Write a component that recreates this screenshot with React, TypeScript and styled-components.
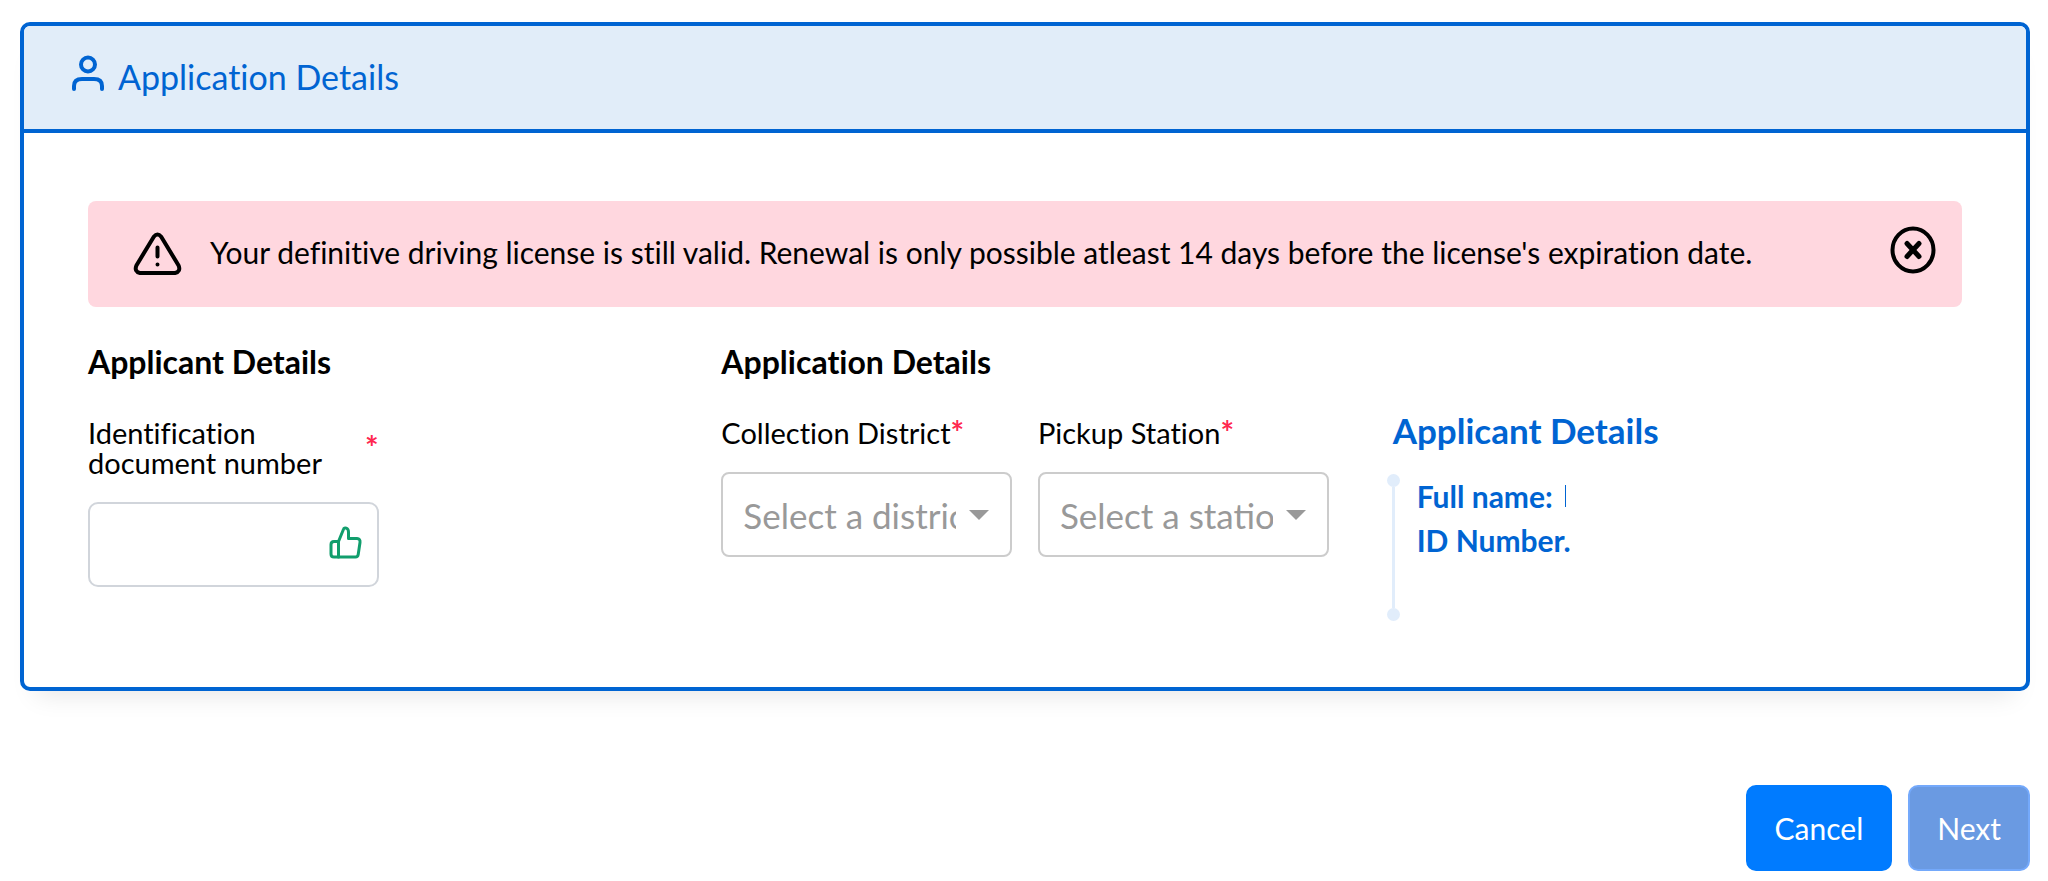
import React from 'react';
import styled, { createGlobalStyle } from 'styled-components';

const blue = '#0064d2';
const font = 'Lato, "Open Sans", sans-serif';

const GlobalStyle = createGlobalStyle`
  *, *::before, *::after { box-sizing: border-box; }
  body {
    margin: 0;
    background: #fff;
    color: #000;
    font-family: ${font};
    font-variant-ligatures: none;
  }
  h1, h2, h3, p, ul { margin: 0; padding: 0; }
`;

const Page = styled.main`
  padding: 22px 18px 8px 20px;
`;

const Card = styled.section`
  border: 4px solid ${blue};
  border-radius: 10px;
  background: #fff;
  box-shadow: 0 20px 24px -16px rgba(0, 0, 0, 0.1);
`;

const CardHeader = styled.header`
  display: flex;
  align-items: center;
  gap: 12px;
  height: 107px;
  padding: 0 46px 2px;
  border-bottom: 4px solid ${blue};
  border-radius: 6px 6px 0 0;
  background: #e1edf9;
  color: ${blue};
`;

const CardTitle = styled.h1`
  font-size: 34px;
  line-height: 40px;
  font-weight: 400;
`;

const UserIcon = styled.svg`
  width: 36px;
  height: 48px;
  fill: none;
  stroke: currentColor;
  stroke-width: 4;
  stroke-linecap: round;
`;

const CardBody = styled.div`
  padding: 68px 64px 66px;
`;

const Alert = styled.div`
  display: flex;
  align-items: center;
  min-height: 106px;
  padding: 0 22px 4px 44px;
  border-radius: 8px;
  background: #ffd7df;
`;

const AlertText = styled.p`
  flex: 1;
  margin-left: 28px;
  font-size: 30px;
  line-height: 40px;
`;

const AlertIcon = styled.svg`
  width: 50px;
  height: 48px;
  fill: none;
  stroke: currentColor;
  stroke-width: 4;
  stroke-linecap: round;
  stroke-linejoin: round;
`;

const CloseButton = styled.button`
  display: flex;
  padding: 0 2px 4px 0;
  border: 0;
  background: none;
  color: inherit;
  cursor: pointer;
`;

const Columns = styled.div`
  display: grid;
  grid-template-columns: repeat(3, minmax(0, 1fr));
  gap: 26px;
  margin-top: 35px;
`;

const SectionTitle = styled.h2`
  margin-bottom: 36px;
  font-size: 32px;
  line-height: 40px;
  font-weight: 700;
`;

const Fields = styled.div`
  display: grid;
  grid-template-columns: repeat(2, minmax(0, 1fr));
  gap: 26px;
`;

const Field = styled.div`
  display: flex;
  flex-direction: column;
  gap: 24px;
`;

const Label = styled.label<{ $spread?: boolean }>`
  display: flex;
  align-items: center;
  justify-content: ${(p) => (p.$spread ? 'space-between' : 'flex-start')};
  font-size: 29px;
  line-height: 30px;
`;

const Required = styled.span`
  color: #ff2850;
  font-size: 32px;
  font-weight: 700;
`;

const Control = styled.div`
  position: relative;
  display: flex;
`;

const TextInput = styled.input`
  width: 100%;
  height: 85px;
  padding: 0 60px 0 22px;
  border: 2px solid #d1d5db;
  border-radius: 10px;
  background: #fff;
  font: 400 30px/40px ${font};
`;

const Select = styled.select`
  width: 100%;
  height: 85px;
  padding: 0 54px 0 20px;
  border: 2px solid #ccc;
  border-radius: 8px;
  appearance: none;
  background: #fff;
  color: #999;
  font: 400 35px/40px ${font};
`;

const ThumbIcon = styled.svg`
  position: absolute;
  top: 23px;
  right: 17px;
  width: 34px;
  height: 34px;
  fill: none;
  stroke: #119e6d;
  stroke-width: 3;
  stroke-linecap: round;
  stroke-linejoin: round;
  pointer-events: none;
`;

const Caret = styled.svg`
  position: absolute;
  top: 38px;
  right: 23px;
  width: 20px;
  height: 10px;
  fill: #999;
  pointer-events: none;
`;

const Summary = styled.section`
  padding: 68px 0 0 32px;
  color: ${blue};
`;

const SummaryTitle = styled.h2`
  margin: 0 0 24px 6px;
  font-size: 35px;
  line-height: 40px;
  font-weight: 700;
`;

const Timeline = styled.div`
  display: flex;
  gap: 17px;
  min-height: 147px;
`;

const Rail = styled.div`
  display: flex;
  flex-direction: column;
  align-items: center;
  width: 13px;

  &::before,
  &::after {
    content: '';
    width: 13px;
    height: 13px;
    border-radius: 50%;
    background: #e1edfb;
  }
`;

const RailLine = styled.span`
  flex: 1;
  width: 3px;
  background: #e1edfb;
`;

const SummaryList = styled.ul`
  list-style: none;
  font-size: 30px;
  line-height: 44px;
  font-weight: 700;
`;

const SummaryItem = styled.li`
  display: flex;
  align-items: center;
  gap: 12px;
`;

const ValueMark = styled.span`
  width: 1px;
  height: 22px;
  background: ${blue};
`;

const Actions = styled.footer`
  display: flex;
  justify-content: flex-end;
  gap: 16px;
  margin-top: 94px;
`;

const Button = styled.button<{ $muted?: boolean }>`
  height: 86px;
  padding: 0 27px;
  border: 2px solid ${(p) => (p.$muted ? '#74a9fb' : '#007bff')};
  border-radius: 10px;
  background: ${(p) => (p.$muted ? '#6a9ae2' : '#007bff')};
  color: #fff;
  font: 400 30px/40px ${font};
`;

interface DropdownProps {
  id: string;
  label: string;
  placeholder: string;
}

function Dropdown({ id, label, placeholder }: DropdownProps) {
  return (
    <Field>
      <Label htmlFor={id}>
        {label}
        <Required>*</Required>
      </Label>
      <Control>
        <Select id={id} defaultValue="">
          <option value="">{placeholder}</option>
        </Select>
        <Caret viewBox="0 0 20 10" aria-hidden="true">
          <path d="M0 0h20L10 10z" />
        </Caret>
      </Control>
    </Field>
  );
}

export default function App() {
  return (
    <>
      <GlobalStyle />
      <Page>
        <Card>
          <CardHeader>
            <UserIcon viewBox="0 0 36 48" aria-hidden="true">
              <circle cx="18" cy="11.5" r="7" />
              <path d="M4 36v-3q0-7 8-7h12q8 0 8 7v3" />
            </UserIcon>
            <CardTitle>Application Details</CardTitle>
          </CardHeader>
          <CardBody>
            <Alert role="alert">
              <AlertIcon viewBox="0 0 50 48" aria-hidden="true">
                <path d="M21.8 8.7 4.400 37.500Q2 43.500 8 45H43Q49 43.500 46.600 37.500L29.200 8.700Q25.500 4.300 21.800 8.700Z" />
                <path d="M25.500 19.500v9M25.500 36.500v.1" />
              </AlertIcon>
              <AlertText>
                Your definitive driving license is still valid. Renewal is only possible atleast 14 days before the license's expiration date.
              </AlertText>
              <CloseButton type="button" aria-label="Dismiss">
                <AlertIcon viewBox="0 0 50 48" aria-hidden="true">
                  <ellipse cx="25" cy="24" rx="20.500" ry="21.500" />
                  <path d="m19 17.500 12 13M31 17.500l-12 13" strokeWidth="5" />
                </AlertIcon>
              </CloseButton>
            </Alert>
            <Columns>
              <section>
                <SectionTitle>Applicant Details</SectionTitle>
                <Fields>
                  <Field>
                    <Label htmlFor="document-number" $spread>
                      Identification document number
                      <Required>*</Required>
                    </Label>
                    <Control>
                      <TextInput id="document-number" type="text" />
                      <ThumbIcon viewBox="0 0 34 34" aria-hidden="true">
                        <path d="M10.500 16.500 15.500 4.200c.6-2.200 5-1.800 5 2.800V13.500h8.500q3.500.2 3 4l-1.800 12q-.4 2.500-2.700 2.500H6q-3 0-3-3V19.500q0-3 3-3z" />
                        <path d="M10.500 16.500V32" />
                      </ThumbIcon>
                    </Control>
                  </Field>
                </Fields>
              </section>
              <section>
                <SectionTitle>Application Details</SectionTitle>
                <Fields>
                  <Dropdown id="district" label="Collection District" placeholder="Select a district" />
                  <Dropdown id="station" label="Pickup Station" placeholder="Select a station" />
                </Fields>
              </section>
              <Summary>
                <SummaryTitle>Applicant Details</SummaryTitle>
                <Timeline>
                  <Rail>
                    <RailLine />
                  </Rail>
                  <SummaryList>
                    <SummaryItem>
                      Full name:
                      <ValueMark />
                    </SummaryItem>
                    <SummaryItem>ID Number.</SummaryItem>
                  </SummaryList>
                </Timeline>
              </Summary>
            </Columns>
          </CardBody>
        </Card>
        <Actions>
          <Button type="button">Cancel</Button>
          <Button type="button" disabled $muted>
            Next
          </Button>
        </Actions>
      </Page>
    </>
  );
}
